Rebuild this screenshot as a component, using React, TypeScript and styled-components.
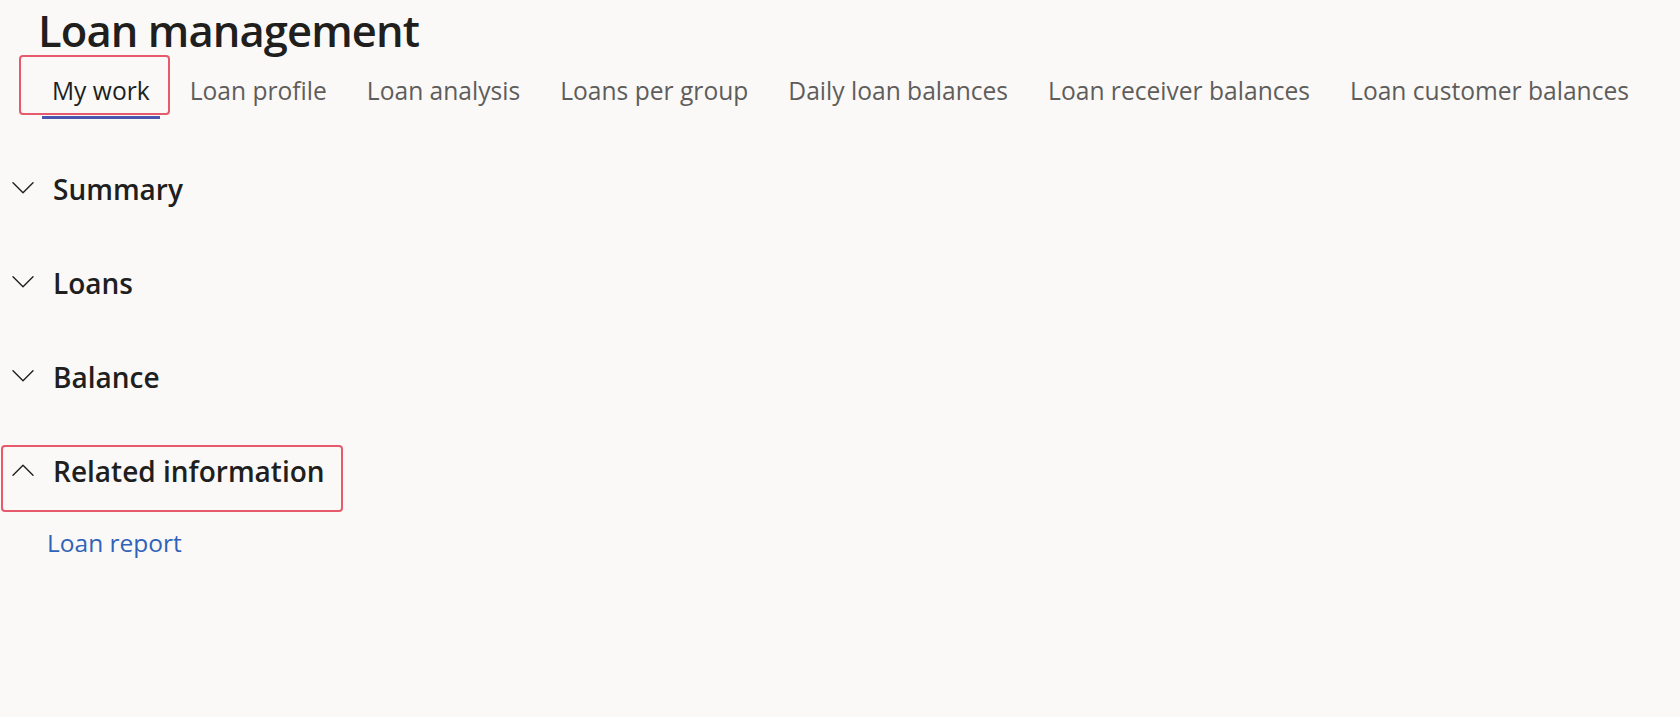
import React, { useState } from "react";
import styled, { createGlobalStyle, css } from "styled-components";

const tabs = [
  "My work",
  "Loan profile",
  "Loan analysis",
  "Loans per group",
  "Daily loan balances",
  "Loan receiver balances",
  "Loan customer balances",
];

const sections = [
  { title: "Summary", open: false },
  { title: "Loans", open: false },
  { title: "Balance", open: false },
  { title: "Related information", open: true, marked: true },
];

const GlobalStyle = createGlobalStyle`
  html, body {
    margin: 0;
    padding: 0;
    background: #faf9f8;
  }
  body {
    font-family: "Open Sans", "Noto Sans", sans-serif;
    color: #201f1e;
  }
`;

const Chevron: React.FC<{ up?: boolean }> = ({ up }) => (
  <svg width="22" height="12" viewBox="0 0 22 12" fill="none">
    <path
      d={up ? "M1 11.2 L11 1.2 L21 11.2" : "M1 0.8 L11 10.8 L21 0.8"}
      stroke="#201f1e"
      strokeWidth="1.4"
      strokeLinecap="round"
      strokeLinejoin="round"
    />
  </svg>
);

const App: React.FC = () => {
  const [active, setActive] = useState(0);

  return (
    <StyledPage>
      <GlobalStyle />
      <StyledTitle>Loan management</StyledTitle>

      <StyledTabBar>
        {tabs.map((name, i) => (
          <StyledTab
            key={name}
            $active={i === active}
            $marked={i === 0}
            onClick={() => setActive(i)}
          >
            {name}
          </StyledTab>
        ))}
      </StyledTabBar>

      <StyledSections>
        {sections.map((item) => (
          <StyledSection key={item.title}>
            <StyledHeader $marked={item.marked}>
              <Chevron up={item.open} />
              <span>{item.title}</span>
            </StyledHeader>
            {item.open && <StyledLink href="#">Loan report</StyledLink>}
          </StyledSection>
        ))}
      </StyledSections>
    </StyledPage>
  );
};

const marker = css`
  content: "";
  position: absolute;
  border: 2px solid rgba(226, 62, 84, 0.85);
  border-radius: 4px;
  pointer-events: none;
`;

const StyledPage = styled.div`
  min-height: 717px;
  display: flex;
  flex-direction: column;
  padding-top: 3px;
`;

const StyledTitle = styled.h1`
  margin: 0;
  padding-left: 38px;
  font-size: 43.5px;
  line-height: 56px;
  font-weight: 600;
  color: #201f1e;
  letter-spacing: -0.9px;
`;

const StyledTabBar = styled.nav`
  display: flex;
  align-items: flex-start;
  gap: 20px;
  margin-top: 12px;
  padding-left: 42px;
`;

const StyledTab = styled.div<{ $active?: boolean; $marked?: boolean }>`
  position: relative;
  padding: 0 10px 5px;
  font-size: 24.6px;
  line-height: 40px;
  white-space: nowrap;
  cursor: pointer;
  color: ${(p) => (p.$active ? "#201f1e" : "#5f5d5b")};
  border-bottom: 3px solid ${(p) => (p.$active ? "#4a56ad" : "transparent")};

  ${(p) =>
    p.$marked &&
    css`
      &::after {
        ${marker};
        left: -23px;
        top: -16px;
        right: -10px;
        bottom: 1px;
      }
    `}
`;

const StyledSections = styled.div`
  display: flex;
  flex-direction: column;
  gap: 44px;
  margin-top: 45px;
`;

const StyledSection = styled.section`
  display: flex;
  flex-direction: column;
`;

const StyledHeader = styled.div<{ $marked?: boolean }>`
  position: relative;
  display: flex;
  align-items: center;
  gap: 19px;
  height: 50px;
  padding-left: 12px;
  font-size: 28px;
  line-height: 50px;
  font-weight: 600;
  color: #201f1e;

  svg {
    flex: none;
    margin-top: -2px;
  }

  ${(p) =>
    p.$marked &&
    css`
      &::after {
        ${marker};
        left: 1px;
        top: -1px;
        width: 338px;
        height: 63px;
      }
    `}
`;

const StyledLink = styled.a`
  margin-top: 31px;
  padding-left: 47px;
  font-size: 24.5px;
  line-height: 32px;
  color: #2f63b7;
  text-decoration: none;
`;

export default App;
